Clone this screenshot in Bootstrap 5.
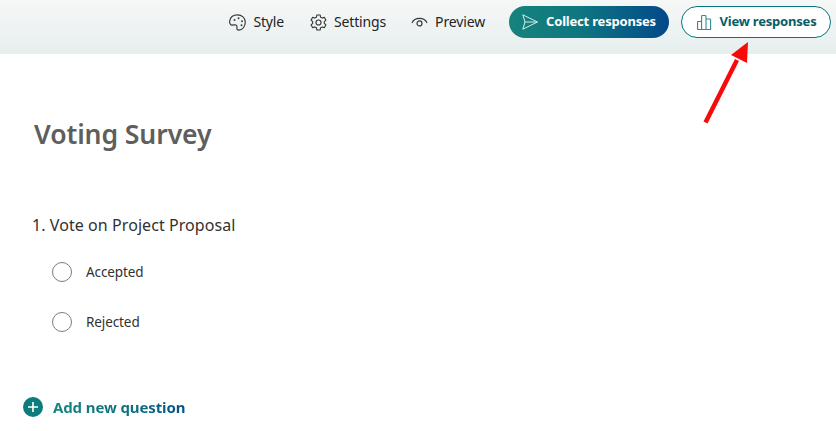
<!DOCTYPE html>
<html lang="en">
<head>
  <meta charset="UTF-8" />
  <title>Voting Survey</title>
  <link href="https://cdn.jsdelivr.net/npm/bootstrap@5.3.3/dist/css/bootstrap.min.css" rel="stylesheet" />
  <style>
    html, body { height: 431px; overflow: hidden; }
    body {
      font-family: "Noto Sans", "Open Sans", sans-serif;
      background: #fff;
      color: #242424;
    }
    .top-strip {
      height: 54px;
      padding-top: 6px;
      padding-right: 5px;
      background: linear-gradient(180deg, #f6f7f7 0%, #e6efee 100%);
    }
    .tool-item {
      font-size: 14px;
      line-height: 18px;
      color: #242424;
      letter-spacing: -0.15px;
      margin-right: 25px;
    }
    .tool-item svg { display: block; margin-right: 6px; }
    .tool-item.tool-preview { margin-right: 24px; }
    .tool-preview svg { margin-right: 7px; }
    .pill-btn {
      height: 32px;
      border-radius: 16px;
      font-size: 13px;
      font-weight: 700;
      letter-spacing: -0.2px;
      white-space: nowrap;
    }
    .pill-btn svg { margin-right: 8px; }
    .pill-collect {
      width: 160px;
      margin-right: 12px;
      color: #fff;
      background: linear-gradient(90deg, #16837c 0%, #0e7680 45%, #03488a 100%);
    }
    .pill-view {
      width: 150px;
      padding-left: 1px;
      color: #035e68;
      background: #fff;
      border: 1px solid #03787c;
    }
    .survey-title {
      margin: 0;
      padding: 62px 0 0 34px;
      font-size: 26.6px;
      line-height: 36px;
      font-weight: 600;
      color: #605e5c;
      letter-spacing: -0.1px;
    }
    .question-text {
      padding: 61px 0 0 32px;
      font-size: 16px;
      line-height: 24px;
      color: #323130;
      letter-spacing: 0.07px;
    }
    .choice-list { padding: 25px 0 0 52px; gap: 30px; }
    .choice-row { height: 20px; font-size: 13.5px; color: #323130; letter-spacing: -0.1px; }
    .choice-dot {
      width: 20px;
      height: 20px;
      border-radius: 50%;
      border: 1px solid #7f7b78;
      margin-right: 14px;
    }
    .add-row { padding: 65px 0 0 23px; }
    .add-dot {
      width: 20px;
      height: 20px;
      border-radius: 50%;
      background: #0f7c7c;
      margin-right: 10px;
    }
    .add-text {
      font-size: 15px;
      font-weight: 700;
      line-height: 20px;
      letter-spacing: -0.12px;
      background: linear-gradient(90deg, #13857e 0%, #0f6f80 60%, #04508a 100%);
      -webkit-background-clip: text;
      background-clip: text;
      color: transparent;
    }
    .red-arrow { position: absolute; left: 695px; top: 38px; }
  </style>
</head>
<body>
  <div class="top-strip d-flex justify-content-end">
    <div class="d-flex align-items-center" style="height:32px">
      <div class="tool-item d-flex align-items-center">
        <svg width="19" height="19" viewBox="0 0 18 18" fill="none" stroke="#3a3a3a" stroke-width="1.1">
          <path d="M1.6 7.4C2.4 3.8 5.4 1.800 9 1.800c4 0 7.400 2.800 7.400 6.800 0 4.200-2.800 7.600-6 7.600-1.800 0-2.200-1.100-1.900-2.200.3-1.500-.5-2.800-2-2.900-1.100 0-2 .5-3.100.4C2 11.200 1.200 9.200 1.600 7.400z"/>
          <circle cx="6.2" cy="6.6" r=".9" fill="#3a3a3a" stroke="none"/>
          <circle cx="10" cy="5" r=".9" fill="#3a3a3a" stroke="none"/>
          <circle cx="13.3" cy="7.8" r=".9" fill="#3a3a3a" stroke="none"/>
          <circle cx="12.8" cy="11.6" r=".9" fill="#3a3a3a" stroke="none"/>
        </svg>
        <span>Style</span>
      </div>
      <div class="tool-item d-flex align-items-center">
        <svg width="19" height="19" viewBox="0 0 18 18" fill="none" stroke="#3a3a3a" stroke-width="1.1" stroke-linejoin="round">
          <circle cx="9" cy="9" r="2.4"/>
          <path d="M7.5 1.900h3l.5 2.100 1.500.8 2-.7 1.500 2.600-1.500 1.500v1.600l1.500 1.500-1.500 2.600-2-.7-1.500.8-.5 2.100h-3l-.5-2.100-1.500-.8-2 .7-1.500-2.600 1.500-1.500V8.200L2 6.700l1.500-2.600 2 .7 1.500-.8z"/>
        </svg>
        <span>Settings</span>
      </div>
      <div class="tool-item tool-preview d-flex align-items-center">
        <svg width="17" height="18" viewBox="0 0 17 18" fill="none" stroke="#3a3a3a" stroke-width="1.2" stroke-linecap="round">
          <path d="M1.2 9.600C2.400 6.800 5.200 5.400 8.500 5.400s6.100 1.400 7.300 4.200"/>
          <circle cx="8.5" cy="10.4" r="2.5"/>
        </svg>
        <span>Preview</span>
      </div>
      <div class="pill-btn pill-collect d-flex align-items-center justify-content-center">
        <svg width="16" height="16" viewBox="0 0 16 16" fill="none" stroke="#d5ecea" stroke-width="1" stroke-linejoin="round">
          <path d="M.8.800 15.400 8 .8 15.200 3 8zM3 8h12.400"/>
        </svg>
        <span>Collect responses</span>
      </div>
      <div class="pill-btn pill-view d-flex align-items-center justify-content-center">
        <svg width="15" height="15" viewBox="0 0 15 15" fill="none" stroke="#2f8d90" stroke-width="1.1" stroke-linejoin="round">
          <path d="M.6 6.500h4v8h-4zM4.600 1.400q0-.9.900-.9h2.600q.9 0 .9.900v13.100H4.600zM9 4h3.700q.9 0 .9.900v9.600H9z"/>
        </svg>
        <span>View responses</span>
      </div>
    </div>
  </div>

  <h1 class="survey-title">Voting Survey</h1>
  <div class="question-text">1. Vote on Project Proposal</div>

  <div class="choice-list d-flex flex-column">
    <div class="choice-row d-flex align-items-center"><span class="choice-dot"></span><span>Accepted</span></div>
    <div class="choice-row d-flex align-items-center"><span class="choice-dot"></span><span>Rejected</span></div>
  </div>

  <div class="add-row d-flex align-items-center">
    <span class="add-dot d-flex align-items-center justify-content-center">
      <svg width="10" height="10" viewBox="0 0 10 10" stroke="#fff" stroke-width="1.6"><path d="M5 0v10M0 5h10"/></svg>
    </span>
    <span class="add-text">Add new question</span>
  </div>

  <svg class="red-arrow" width="60" height="90" viewBox="0 0 60 90">
    <path d="M10.500 84.500 42 22" stroke="#f90a0a" stroke-width="4.5" fill="none"/>
    <path d="M53 4 36 17 52 25z" fill="#f90a0a"/>
  </svg>
</body>
</html>
